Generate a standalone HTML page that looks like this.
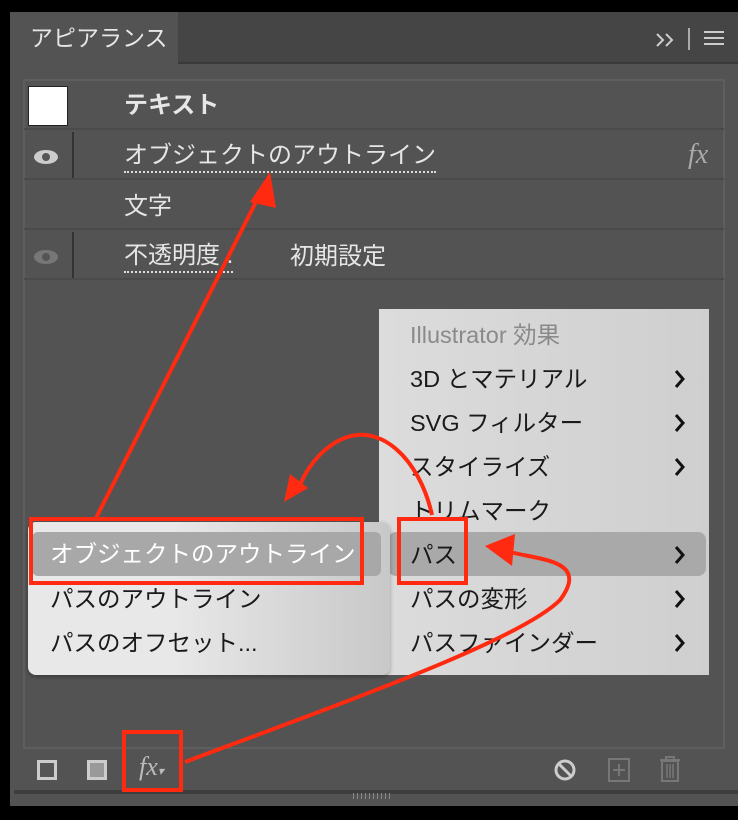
<!DOCTYPE html>
<html><head><meta charset="utf-8"><style>
*{margin:0;padding:0;box-sizing:border-box}
body{width:738px;height:820px;background:#000;position:relative;overflow:hidden;font-family:"Liberation Sans","Noto Sans CJK JP",sans-serif;color:#ddd}
.a{position:absolute}
.row{position:absolute;left:24px;width:700px;height:48px;border-bottom:2px solid #4a4a4a}
.t{position:absolute;font-size:24px;color:#e6e6e6;white-space:nowrap;line-height:30px}
.m{position:absolute;font-size:23.5px;color:#1a1a1a;white-space:nowrap;line-height:30px}
.red{position:absolute;border:4px solid #ff2a10}
</style></head><body>
<div class="a" style="left:10px;top:12px;width:728px;height:794px;background:#535353"></div>
<div class="a" style="left:178px;top:12px;width:560px;height:52px;background:#454545;border-bottom:2px solid #3a3a3a"></div>
<div class="t" style="left:30px;top:23px;font-size:23px">アピアランス</div>
<svg class="a" style="left:654px;top:30px" width="24" height="20"><path d="M3 4 L9 10 L3 16 M12 4 L18 10 L12 16" stroke="#ccc" stroke-width="2" fill="none"/></svg>
<div class="a" style="left:688px;top:28px;width:2px;height:22px;background:#aaa"></div>
<div class="a" style="left:704px;top:31px;width:20px;height:2px;background:#ccc;box-shadow:0 6px 0 #ccc,0 12px 0 #ccc"></div>
<div class="a" style="left:23px;top:79px;width:702px;height:670px;border:2px solid #5e5e5e"></div>
<div class="row" style="top:82px"></div>
<div class="row" style="top:132px"></div>
<div class="row" style="top:182px"></div>
<div class="row" style="top:232px"></div>
<div class="a" style="left:28px;top:86px;width:40px;height:40px;background:#fff;border:1px solid #222"></div>
<div class="t" style="left:124px;top:91px;font-weight:bold">テキスト</div>
<div class="a" style="left:72px;top:132px;width:2px;height:46px;background:#333"></div>
<div class="a" style="left:72px;top:232px;width:2px;height:46px;background:#333"></div>
<svg class="a" style="left:33px;top:146px" width="26" height="22"><ellipse cx="13" cy="11" rx="12" ry="7" fill="#ccc"/><circle cx="13" cy="11" r="4" fill="#555"/></svg>
<svg class="a" style="left:33px;top:246px" width="26" height="22"><ellipse cx="13" cy="11" rx="12" ry="7" fill="#777"/><circle cx="13" cy="11" r="4" fill="#555"/></svg>
<div class="t" style="left:124px;top:141px;border-bottom:2px dotted #ddd">オブジェクトのアウトライン</div>
<div class="t" style="left:688px;top:140px;font-style:italic;color:#aaa;font-family:'Liberation Serif',serif;font-size:28px">fx</div>
<div class="t" style="left:124px;top:192px">文字</div>
<div class="t" style="left:124px;top:241px;border-bottom:2px dotted #ddd">不透明度 .</div>
<div class="t" style="left:290px;top:242px">初期設定</div>
<div class="a" style="left:379px;top:309px;width:330px;height:366px;background:linear-gradient(90deg,#dcdcdc,#cfcfcf)"></div>
<div class="a" style="left:388px;top:532px;width:318px;height:44px;background:#a9a9a9;border-radius:8px"></div>
<div class="m" style="left:410px;top:320px;color:#8a8a8a">Illustrator 効果</div>
<div class="m" style="left:410px;top:364px">3D とマテリアル</div>
<div class="m" style="left:410px;top:408px">SVG フィルター</div>
<div class="m" style="left:410px;top:452px">スタイライズ</div>
<div class="m" style="left:410px;top:496px">トリムマーク</div>
<div class="m" style="left:410px;top:540px">パス</div>
<div class="m" style="left:410px;top:584px">パスの変形</div>
<div class="m" style="left:410px;top:628px">パスファインダー</div>
<svg class="a" style="left:670px;top:360px" width="20" height="300"><g stroke="#111" stroke-width="3" fill="none"><path d="M6 11 L13 19 L6 27"/><path d="M6 55 L13 63 L6 71"/><path d="M6 99 L13 107 L6 115"/><path d="M6 187 L13 195 L6 203"/><path d="M6 231 L13 239 L6 247"/><path d="M6 275 L13 283 L6 291"/></g></svg>
<div class="a" style="left:28px;top:522px;width:362px;height:153px;background:linear-gradient(90deg,#e8e8e8 40%,#c8c8c8);border-radius:8px;box-shadow:0 2px 4px rgba(0,0,0,.3)"></div>
<div class="a" style="left:32px;top:532px;width:349px;height:44px;background:#a8a8a8;border-radius:6px"></div>
<div class="m" style="left:50px;top:539px;color:#fff">オブジェクトのアウトライン</div>
<div class="m" style="left:50px;top:584px">パスのアウトライン</div>
<div class="m" style="left:50px;top:628px">パスのオフセット...</div>
<div class="a" style="left:37px;top:760px;width:20px;height:20px;border:3px solid #ccc;background:#555"></div>
<div class="a" style="left:87px;top:760px;width:20px;height:20px;border:3px solid #ccc;background:#999"></div>
<div class="t" style="left:139px;top:752px;font-style:italic;color:#bbb;font-family:'Liberation Serif',serif;font-size:26px">fx<span style="font-size:12px">▾</span></div>
<svg class="a" style="left:553px;top:758px" width="24" height="24"><circle cx="12" cy="12" r="9" fill="none" stroke="#ccc" stroke-width="3"/><line x1="6" y1="6" x2="18" y2="18" stroke="#ccc" stroke-width="3"/></svg>
<svg class="a" style="left:607px;top:757px" width="24" height="26"><rect x="2" y="2" width="20" height="22" fill="none" stroke="#777" stroke-width="2"/><path d="M12 7 V19 M6 13 H18" stroke="#777" stroke-width="2"/></svg>
<svg class="a" style="left:657px;top:755px" width="26" height="28"><path d="M3 5 H23 M9 5 V2 H17 V5" stroke="#777" stroke-width="2" fill="none"/><rect x="5" y="6" width="16" height="20" fill="none" stroke="#777" stroke-width="2"/><path d="M10 9 V23 M13 9 V23 M16 9 V23" stroke="#777" stroke-width="1.5"/></svg>
<div class="a" style="left:14px;top:790px;width:724px;height:4px;background:#3d3d3d"></div>
<div class="a" style="left:353px;top:793px;width:38px;height:6px;background:repeating-linear-gradient(90deg,#888 0 1px,transparent 1px 4px)"></div>
<div class="red" style="left:29px;top:517px;width:335px;height:68px"></div>
<div class="red" style="left:397px;top:517px;width:71px;height:68px"></div>
<div class="red" style="left:122px;top:730px;width:61px;height:62px"></div>
<svg class="a" style="left:0;top:0" width="738" height="820">
<g fill="none" stroke="#ff2a10" stroke-width="4">
<path d="M95 520 L262 190"/>
<path d="M432 515 C420 460 380 420 340 440 C320 450 305 470 298 490"/>
<path d="M185 762 C350 700 520 640 560 600 C590 560 540 560 510 552"/>
</g>
<g fill="#ff2a10">
<polygon points="270,172 250,202 276,208"/>
<polygon points="284,502 290,474 308,488"/>
<polygon points="485,546 515,534 512,566"/>
</g>
</svg>
</body></html>
